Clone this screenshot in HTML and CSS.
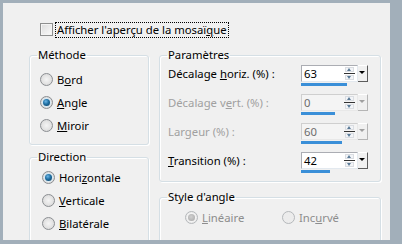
FILE: index.html
```html
<!DOCTYPE html>
<html lang="fr">
<head>
  <meta charset="UTF-8">
  <title>Mosaïque</title>
  <link rel="stylesheet" href="styles.css">
</head>
<body>
  <div class="frame">
    <div class="panel">
      <div class="check-row">
        <span class="checkbox"></span>
        <span class="focus">Afficher l'aperçu de la mosaï<u>q</u>ue</span>
      </div>

      <div class="columns">
        <div class="col col-left">
          <fieldset class="group method">
            <legend>Méthode</legend>
            <div class="group-body">
              <div class="radio-item"><span class="radio"></span><span>B<u>o</u>rd</span></div>
              <div class="radio-item"><span class="radio checked"></span><span><u>A</u>ngle</span></div>
              <div class="radio-item"><span class="radio"></span><span><u>M</u>iroir</span></div>
            </div>
          </fieldset>

          <fieldset class="group direction">
            <legend>Direction</legend>
            <div class="group-body">
              <div class="radio-item"><span class="radio checked"></span><span>Hori<u>z</u>ontale</span></div>
              <div class="radio-item"><span class="radio"></span><span><u>V</u>erticale</span></div>
              <div class="radio-item"><span class="radio"></span><span><u>B</u>ilatérale</span></div>
            </div>
          </fieldset>
        </div>

        <div class="col col-right">
          <fieldset class="group params">
            <legend>Paramètres</legend>
            <div class="group-body">
              <div class="param-row">
                <span class="param-label">Décalage <u>h</u>oriz. (%) :</span>
                <div class="spin">
                  <div class="spin-box">
                    <div class="spin-input"><span>63</span><span class="arrows"><span class="up"></span><span class="down"></span></span></div>
                    <span class="drop"></span>
                  </div>
                  <div class="bar" style="width: 46px"></div>
                </div>
              </div>
              <div class="param-row disabled">
                <span class="param-label">Décalage v<u>e</u>rt. (%) :</span>
                <div class="spin">
                  <div class="spin-box">
                    <div class="spin-input"><span>0</span><span class="arrows"><span class="up"></span><span class="down"></span></span></div>
                    <span class="drop"></span>
                  </div>
                  <div class="bar" style="width: 34px"></div>
                </div>
              </div>
              <div class="param-row disabled">
                <span class="param-label">Lar<u>g</u>eur (%) :</span>
                <div class="spin">
                  <div class="spin-box">
                    <div class="spin-input"><span>60</span><span class="arrows"><span class="up"></span><span class="down"></span></span></div>
                    <span class="drop"></span>
                  </div>
                  <div class="bar" style="width: 41px"></div>
                </div>
              </div>
              <div class="param-row">
                <span class="param-label"><u>T</u>ransition (%) :</span>
                <div class="spin">
                  <div class="spin-box">
                    <div class="spin-input"><span>42</span><span class="arrows"><span class="up"></span><span class="down"></span></span></div>
                    <span class="drop"></span>
                  </div>
                  <div class="bar" style="width: 29px"></div>
                </div>
              </div>
            </div>
          </fieldset>

          <fieldset class="group corner">
            <legend>Style d'angle</legend>
            <div class="group-body corner-row">
              <div class="radio-item disabled"><span class="radio checked"></span><span><u>L</u>inéaire</span></div>
              <div class="radio-item disabled"><span class="radio"></span><span>Inc<u>u</u>rvé</span></div>
            </div>
          </fieldset>
        </div>
      </div>
    </div>
  </div>
</body>
</html>
```

FILE: styles.css
```css
* {
  box-sizing: border-box;
}

body {
  margin: 0;
  background-color: #a2afba;
  font-family: "Noto Sans", "Open Sans", sans-serif;
  font-size: 11.3px;
  color: #000;
}

.frame {
  width: 402px;
  height: 244px;
  padding: 3px 12px 4px 3px;
}

.panel {
  width: 387px;
  height: 237px;
  background-color: #f0f0f0;
  overflow: hidden;
}

u {
  text-decoration-thickness: 1px;
  text-underline-offset: 1px;
}

/* case à cocher du haut */
.check-row {
  display: flex;
  align-items: center;
  gap: 3px;
  height: 15px;
  padding-left: 37px;
  margin-top: 19px;
}

.checkbox {
  width: 13px;
  height: 13px;
  border: 1px solid #8e8f8f;
  background: linear-gradient(135deg, #dcdcdc, #fbfbfb);
  box-shadow: inset 0 0 0 1px #f4f4f4;
}

.focus {
  outline: 1px dotted #000;
  outline-offset: 0;
  padding: 0 1px;
  line-height: 14px;
}

/* colonnes */
.columns {
  display: flex;
  gap: 10px;
  padding-left: 26px;
  margin-top: 11px;
}

.col {
  display: flex;
  flex-direction: column;
}

.col-left {
  width: 120px;
}

.col-right {
  width: 222px;
}

.group {
  margin: 0;
  padding: 0;
  min-width: 0;
  border: 1px solid #d5dfe5;
  border-radius: 3px;
  box-shadow: inset 1px 1px 0 #fff, 1px 1px 0 #fff;
}

.group legend {
  margin-left: 7px;
  padding: 0 1px;
  line-height: 14px;
}

.method {
  height: 97px;
}

.method .group-body {
  padding: 6px 0 0 10px;
}

.direction {
  margin-top: 5px;
  height: 100px;
}

.direction .group-body {
  padding: 2px 0 0 12px;
}

.radio-item {
  display: flex;
  align-items: center;
  gap: 4px;
  height: 23px;
}

.radio {
  position: relative;
  flex: none;
  width: 13px;
  height: 13px;
  border-radius: 50%;
  border: 1px solid #8b8e92;
  background: radial-gradient(circle at 50% 50%, #f4f4f4 0, #e6e6e6 45%, #d2d2d2 100%);
}

.radio.checked::after {
  content: "";
  position: absolute;
  left: 2px;
  top: 2px;
  width: 7px;
  height: 7px;
  border-radius: 50%;
  background: radial-gradient(circle at 40% 35%, #6cb6e6 0, #1f6fa3 45%, #0c3c5c 100%);
  box-shadow: 0 0 0 1px #d6e9f5;
}

/* paramètres */
.params {
  height: 134px;
}

.params .group-body {
  padding: 3px 0 0 8px;
}

.param-row {
  display: flex;
  align-items: flex-start;
  height: 29px;
}

.param-label {
  width: 133px;
  line-height: 17px;
}

.spin {
  width: 67px;
}

.spin-box {
  display: flex;
  height: 17px;
}

.spin-input {
  flex: 1;
  display: flex;
  align-items: center;
  justify-content: space-between;
  padding: 0 2px 0 2px;
  background-color: #fff;
  border: 1px solid;
  border-color: #abadb3 #e3e9ef #e3e9ef #abadb3;
}

.arrows {
  position: relative;
  display: flex;
  flex-direction: column;
  justify-content: space-between;
  width: 11px;
  height: 13px;
}

.arrows::after {
  content: "";
  position: absolute;
  left: 0;
  right: 0;
  top: 6px;
  height: 1px;
  background-color: #333;
}

.up,
.down {
  display: block;
  width: 9px;
  height: 5px;
  margin-left: 1px;
  border: 1px solid #dadde2;
  background-color: #f2f4f7;
  position: relative;
}

.up::after,
.down::after {
  content: "";
  position: absolute;
  left: 1px;
  border-left: 2.5px solid transparent;
  border-right: 2.5px solid transparent;
}

.up::after {
  top: 0;
  border-bottom: 3px solid #5b7a96;
}

.down::after {
  top: 0;
  border-top: 3px solid #5b7a96;
}

.drop {
  position: relative;
  width: 10px;
  background-color: #f0f0f0;
  border-right: 1px solid #5c5c5c;
  border-bottom: 1px solid #5c5c5c;
  border-top: 1px solid #fff;
}

.drop::after {
  content: "";
  position: absolute;
  left: 1px;
  top: 5px;
  border-left: 3px solid transparent;
  border-right: 3px solid transparent;
  border-top: 3px solid #000;
}

.bar {
  height: 3px;
  margin-top: 1px;
  background-color: #3a8fd8;
}

.disabled .param-label {
  color: #a0a0a0;
}

.disabled .spin-input {
  background-color: #f4f4f4;
  color: #6d6d6d;
  border-color: #cfcfcf #e8e8e8 #e8e8e8 #cfcfcf;
}

.disabled .drop {
  border-right-color: #b5b5b5;
  border-bottom-color: #b5b5b5;
}

.disabled .drop::after {
  border-top-color: #a0a0a0;
}

/* style d'angle */
.corner {
  margin-top: 8px;
  height: 60px;
}

.corner-row {
  display: flex;
  padding: 2px 0 0 25px;
}

.corner-row .radio-item {
  width: 97px;
}

.radio-item.disabled {
  color: #8d8d8d;
}

.radio-item.disabled .radio {
  border-color: #b5b8bb;
  background: #ececec;
}

.radio-item.disabled .radio.checked::after {
  background: radial-gradient(circle at 45% 40%, #d0d0d0 0, #a6a6a6 100%);
  box-shadow: 0 0 0 1px #f4f4f4;
}
```
